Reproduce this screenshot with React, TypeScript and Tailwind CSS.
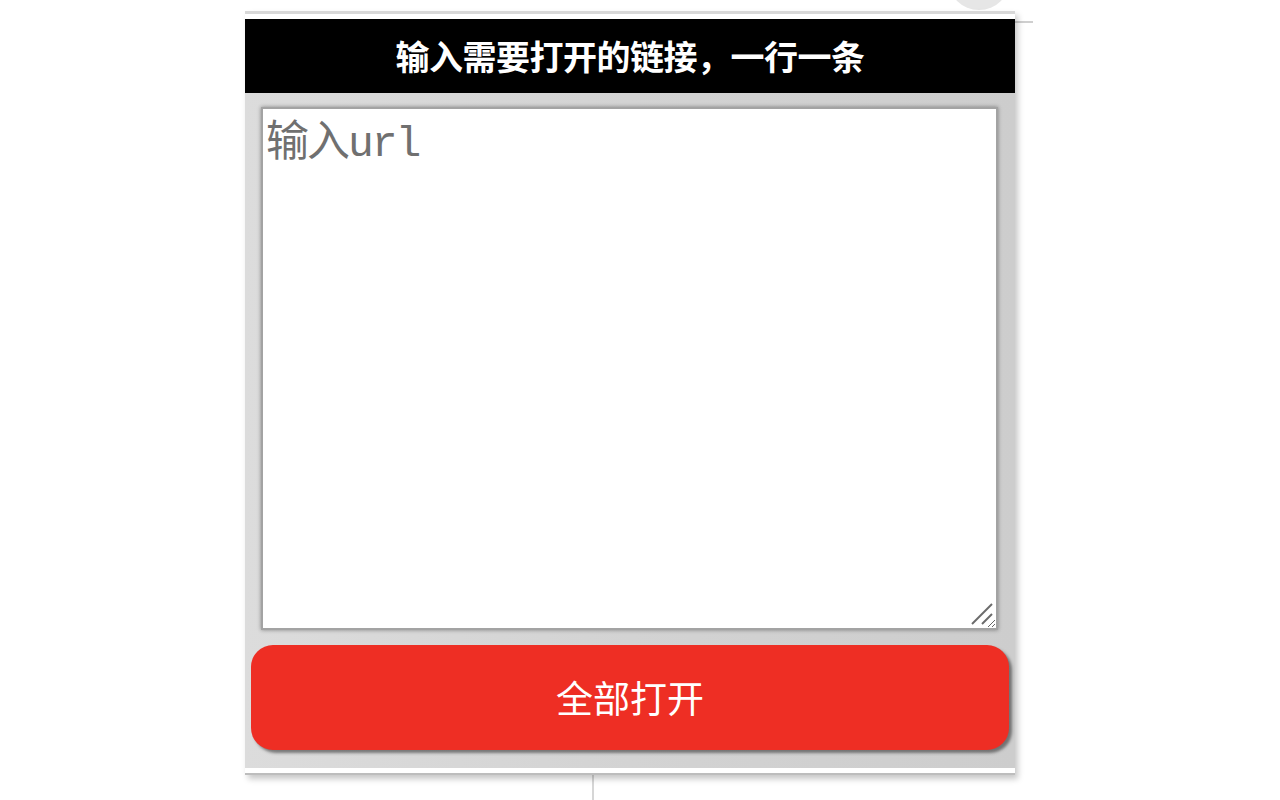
import { useState } from 'react';

export default function App() {
  const [urls, setUrls] = useState('');

  const openAll = () => {
    urls
      .split('\n')
      .map(u => u.trim())
      .filter(Boolean)
      .forEach(u => window.open(u, '_blank'));
  };

  return (
    <div className="relative w-[1280px] h-[800px] bg-white overflow-hidden">
      {/* bits of the page behind the popup */}
      <div className="absolute left-[948px] top-[-52px] w-[62px] h-[62px] rounded-full bg-[#e6e6e6]" />
      <div className="absolute left-[1015px] top-[21px] w-[18px] h-[2px] bg-[#cfcfcf]" />
      <div className="absolute left-[592px] top-[774px] w-[2px] h-[26px] bg-[#d6d6d6]" />

      <div className="pl-[245px] pt-[11px]">
        <div className="relative w-[770px] shadow-[3px_4px_6px_rgba(0,0,0,0.22)]">
          <div className="h-[3px] bg-[#d8d8d8]" />
          <div className="h-[5px] bg-white" />
          <div className="h-[74px] bg-black flex items-center justify-center">
            <h1
              className="text-white font-bold text-[34px] leading-none tracking-[-0.5px]"
              style={{ fontFamily: '"Noto Sans CJK SC", "Noto Sans", sans-serif' }}
            >
              输入需要打开的链接，一行一条
            </h1>
          </div>

          <div className="bg-[#d2d2d2] bg-gradient-to-r from-[#dcdcdc] via-[#d3d3d3] to-[#cdcdcd] pt-[14px] pb-[18px]">
            <div className="relative pl-[16px] pr-[17px]">
              <textarea
                value={urls}
                onChange={e => setUrls(e.target.value)}
                placeholder="输入url"
                className="block w-full h-[523px] bg-white border-2 border-[#a3a3a3] shadow-[0_0_4px_rgba(0,0,0,0.4)] px-[3px] pt-[12px] pb-[6px] text-[43px] leading-[1.1] tracking-[-2px] text-[#333] placeholder:text-[#707070] outline-none resize"
                style={{ fontFamily: '"Liberation Mono", "Noto Sans CJK SC", monospace' }}
              />
              <svg
                className="absolute right-[21px] bottom-[4px] pointer-events-none"
                width="24"
                height="24"
                viewBox="0 0 24 24"
              >
                <line x1="2" y1="22" x2="22" y2="2" stroke="#6b6b6b" strokeWidth="2" />
                <line x1="12" y1="22" x2="22" y2="12" stroke="#6b6b6b" strokeWidth="2" />
              </svg>
            </div>
            <div className="px-[6px] mt-[15px]">
              <button
                onClick={openAll}
                className="w-full h-[105px] rounded-[22px] bg-[#ee2e24] text-white text-[37px] shadow-[3px_3px_3px_rgba(40,40,40,0.55)]"
                style={{ fontFamily: '"Noto Sans CJK SC", "Noto Sans", sans-serif' }}
              >
                全部打开
              </button>
            </div>
          </div>
          <div className="h-[5px] bg-white" />
          <div className="h-[2px] bg-[#bdbdbd]" />
        </div>
      </div>
    </div>
  );
}
